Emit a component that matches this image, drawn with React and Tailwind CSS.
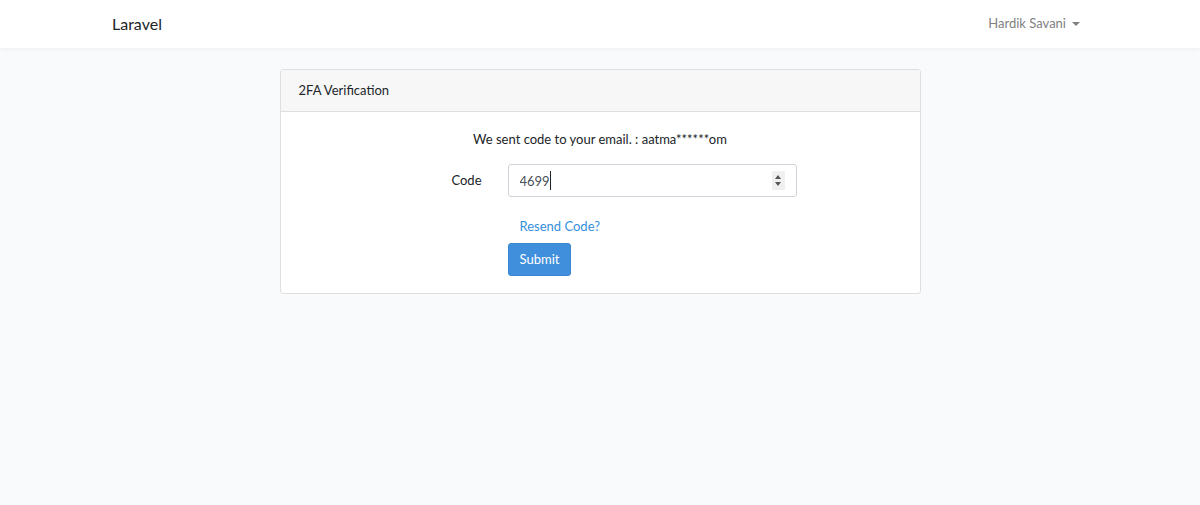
import React, { useState } from 'react';

const App = () => {
  const [code, setCode] = useState('4699');

  return (
    <div
      className="min-h-screen bg-[#f8fafc] text-[#212529] text-[13px]"
      style={{ fontFamily: 'Lato, "Noto Sans", sans-serif' }}
    >
      <nav className="h-[48px] bg-white shadow-[0_2px_4px_rgba(0,0,0,0.04)] flex items-center">
        <div className="w-full pl-[112px] pr-[120px] flex items-center justify-between">
          <a href="#" className="text-[16px] text-[#212529]">Laravel</a>
          <a href="#" className="flex items-center gap-[6px] text-[#808080]">
            Hardik Savani
            <span className="w-0 h-0 border-x-[4px] border-x-transparent border-t-[4px] border-t-[#808080]" />
          </a>
        </div>
      </nav>

      <main className="pt-[21px]">
        <div className="w-[641px] mx-auto bg-white border border-[#dfdfdf] rounded-[3px]">
          <div className="h-[42px] px-[18px] flex items-center bg-[#f7f7f7] border-b border-[#dfdfdf]">
            2FA Verification
          </div>
          <div className="px-[18px] pt-[17px] pb-[17px]">
            <p className="text-center leading-[20px]">
              We sent code to your email. : aatma******om
            </p>
            <div className="flex items-center mt-[15px]">
              <label className="w-[209px] text-right pr-[26px]">Code</label>
              <div className="relative">
                <input
                  type="number"
                  value={code}
                  onChange={(e) => setCode(e.target.value)}
                  className="w-[289px] h-[33px] border border-[#cfd4da] rounded-[3px] px-[11px] text-[13px] text-[#495057] outline-none [appearance:textfield] [&::-webkit-inner-spin-button]:appearance-none [&::-webkit-outer-spin-button]:appearance-none"
                />
                <span className="pointer-events-none absolute left-[12px] top-[7px] h-[19px] border-r border-[#212529] text-transparent leading-[19px]">
                  {code}
                </span>
                <span className="pointer-events-none absolute right-[12px] top-[7px] w-[13px] h-[19px] bg-[#f0f0f0] flex flex-col items-center justify-center gap-[3px]">
                  <span className="w-0 h-0 border-x-[3.5px] border-x-transparent border-b-[4px] border-b-[#555]" />
                  <span className="w-0 h-0 border-x-[3.5px] border-x-transparent border-t-[4px] border-t-[#555]" />
                </span>
              </div>
            </div>
            <div className="ml-[209px] mt-[19px]">
              <a href="#" className="block ml-[12px] text-[#3490dc] leading-[20px]">Resend Code?</a>
              <button className="mt-[7px] h-[33px] px-[11px] bg-[#3f8fdc] text-white rounded-[3px] border border-[#3a86d0]">
                Submit
              </button>
            </div>
          </div>
        </div>
      </main>
    </div>
  );
};

export default App;
